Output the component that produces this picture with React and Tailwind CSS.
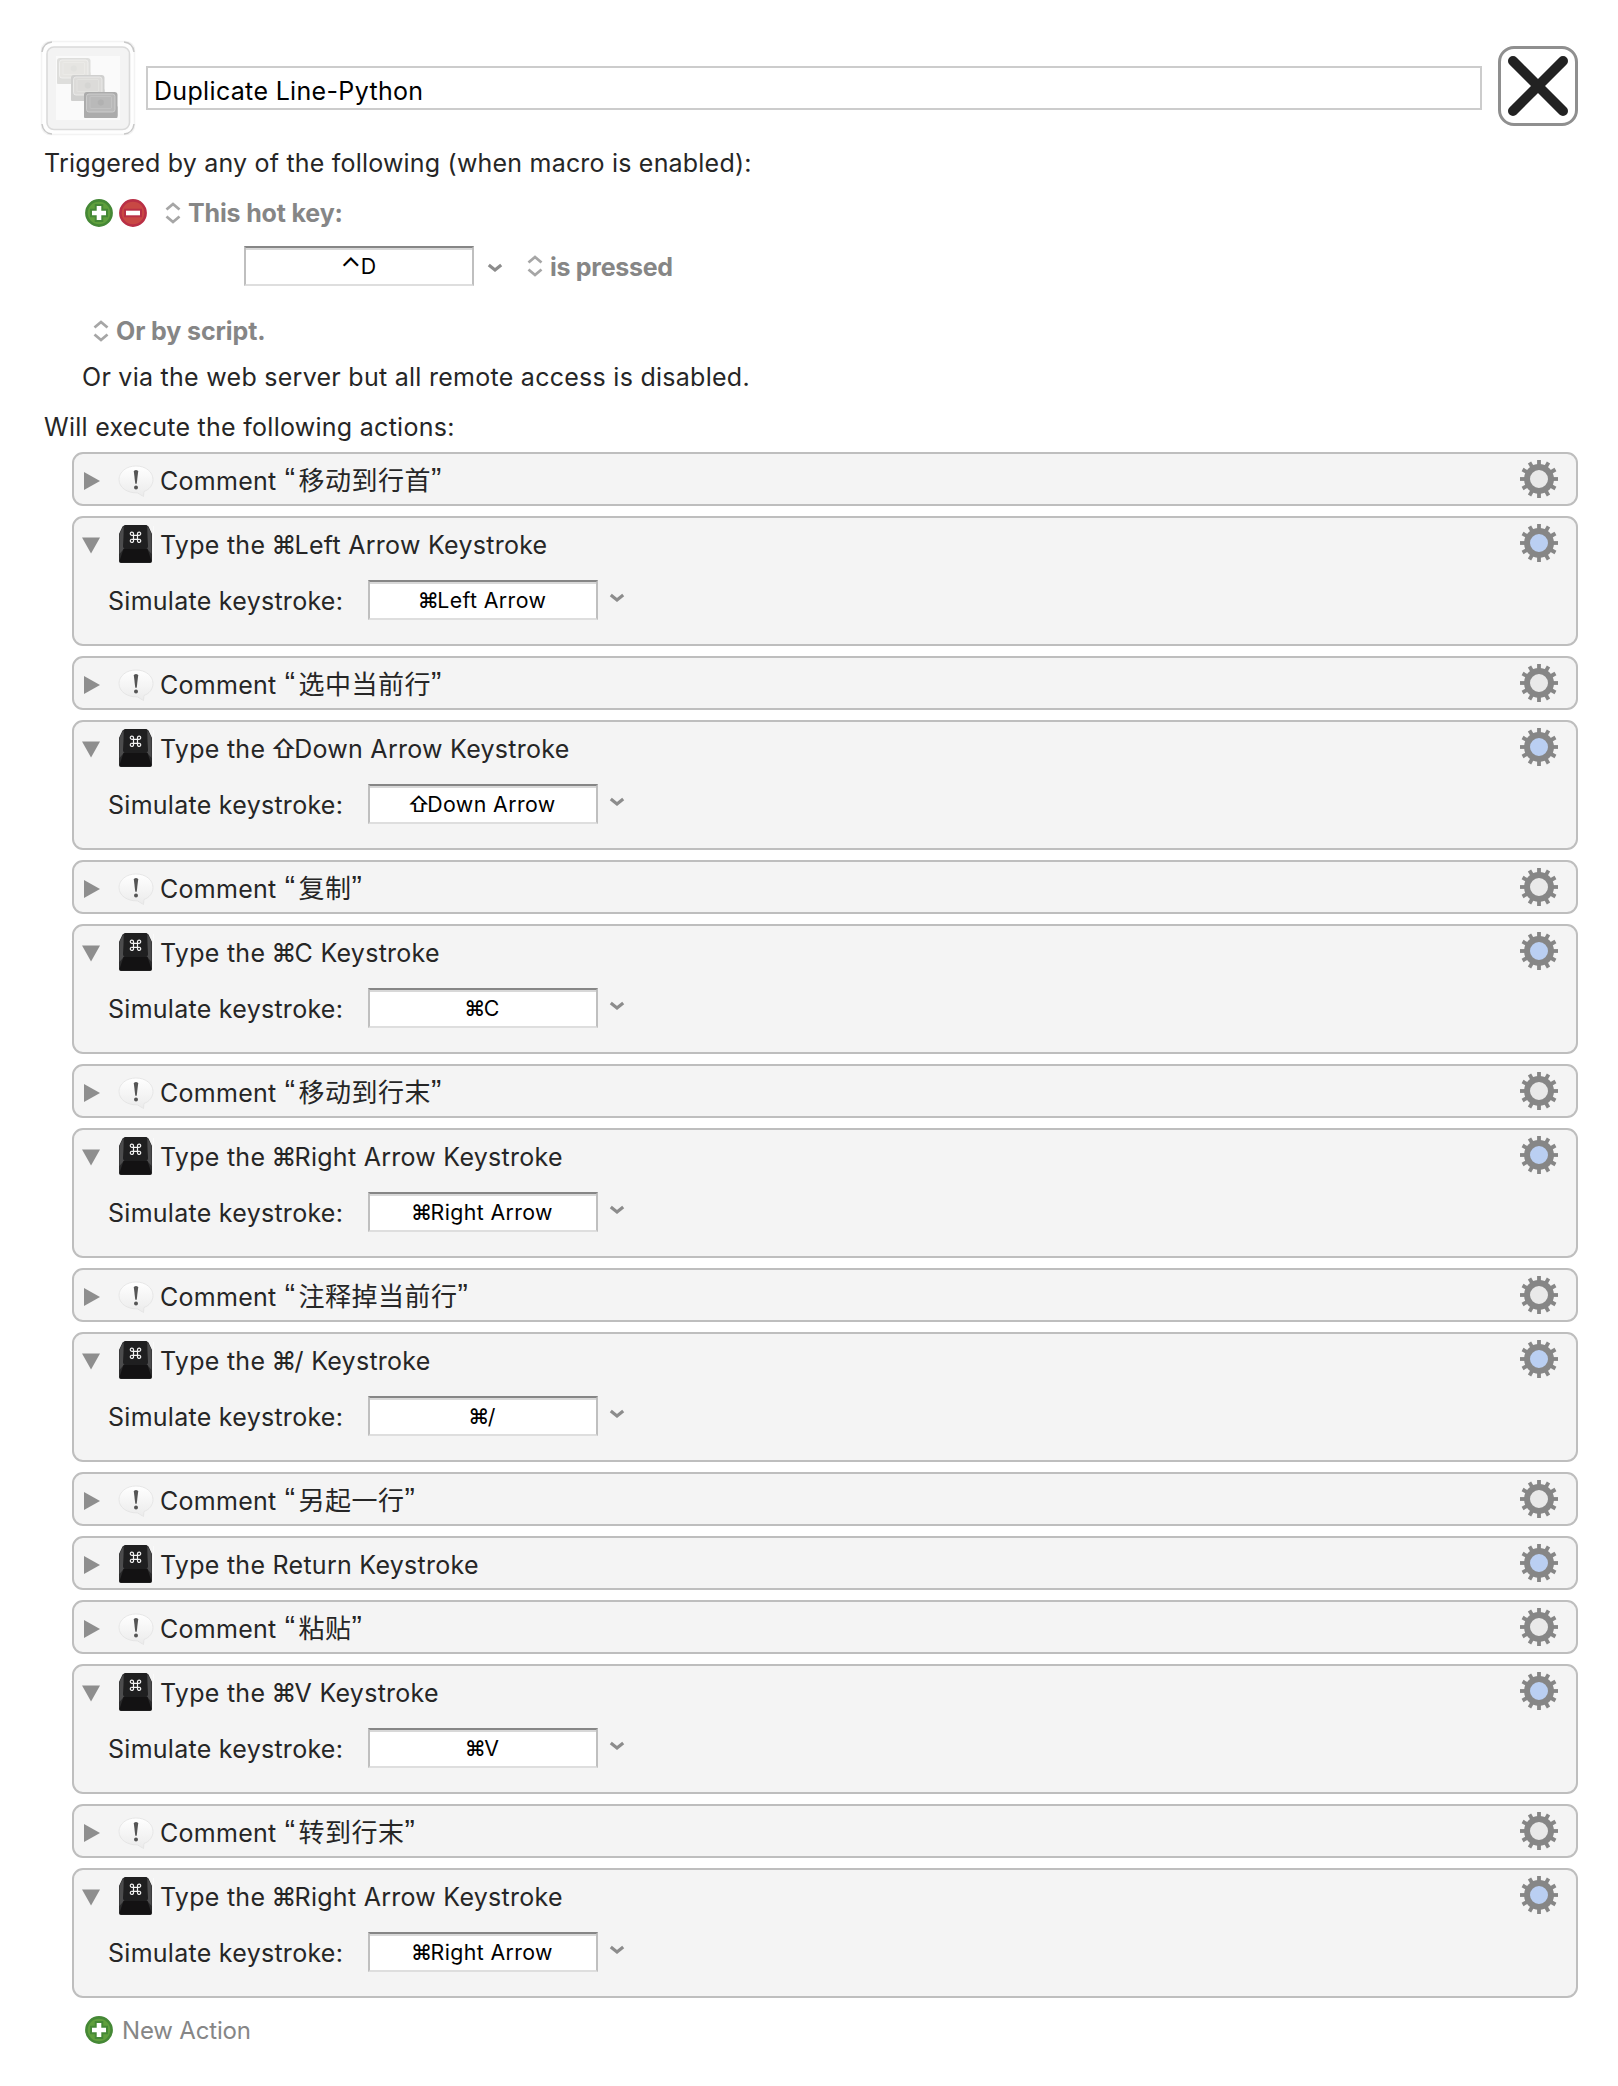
import React from "react";

const actions = [
  { kind: "comment", text: "移动到行首" },
  { kind: "key", open: true, key: "⌘Left Arrow" },
  { kind: "comment", text: "选中当前行" },
  { kind: "key", open: true, key: "⇧Down Arrow" },
  { kind: "comment", text: "复制" },
  { kind: "key", open: true, key: "⌘C" },
  { kind: "comment", text: "移动到行末" },
  { kind: "key", open: true, key: "⌘Right Arrow" },
  { kind: "comment", text: "注释掉当前行" },
  { kind: "key", open: true, key: "⌘/" },
  { kind: "comment", text: "另起一行" },
  { kind: "key", open: false, key: "Return" },
  { kind: "comment", text: "粘贴" },
  { kind: "key", open: true, key: "⌘V" },
  { kind: "comment", text: "转到行末" },
  { kind: "key", open: true, key: "⌘Right Arrow" },
];

function MacroIcon() {
  const key = (x, y, base, face, edge) => (
    <g transform={`translate(${x} ${y})`}>
      <rect width="33.5" height="26" rx="3" fill={base} />
      <rect y="14" width="33.5" height="12" rx="1" fill={base} />
      <rect x="2.5" y="2" width="28.5" height="18" rx="2.5" fill={face} stroke={edge} strokeWidth="0.8" />
      <rect x="6" y="4.5" width="21.5" height="12" rx="1" fill="none" stroke={edge} strokeWidth="0.6" opacity="0.6" />
      <circle cx="16.8" cy="10.5" r="3" fill={base} opacity="0.6" />
    </g>
  );
  return (
    <svg className="size-24 shrink-0" viewBox="0 0 96 96">
      <rect x="1.5" y="1.5" width="93" height="93" rx="9" fill="#fefefe" stroke="#f3f3f3" strokeWidth="1.6" />
      <g fill="none" stroke="#c8c8c8" strokeWidth="1.5">
        <path d="M2 12Q3 3 12 2M84 2Q93 3 94 12M2 84Q3 93 12 94M84 94Q93 93 94 84" />
      </g>
      <rect x="7" y="7" width="82.500" height="82.500" rx="7" fill="#f3f3f3" stroke="#dadada" strokeWidth="1.6" />
      <rect x="16" y="16" width="64" height="64" fill="#fafafa" />
      {key(17, 18, "#dededc", "#e6e5e2", "#f3f3f1")}
      {key(31, 35, "#d0d0cf", "#dcdbd9", "#eeeeec")}
      {key(44, 52, "#ababab", "#b9b9b9", "#d2d2d2")}
    </svg>
  );
}

function CloseButton() {
  return (
    <svg className="size-20 shrink-0" viewBox="0 0 80 80">
      <rect x="1.5" y="1.5" width="77" height="77" rx="14.5" fill="#fff" stroke="#8f8f8f" strokeWidth="3" />
      <path d="M15 15L65 65M65 15L15 65" stroke="#222" strokeWidth="10" strokeLinecap="round" />
    </svg>
  );
}

function RoundButton({ minus }) {
  const line = minus ? "#b92f45" : "#458836";
  const fill = minus ? "#c84844" : "#5f9f3d";
  return (
    <svg className="size-7 shrink-0" viewBox="0 0 28 28">
      <circle cx="14" cy="14" r="12.6" fill={fill} stroke={line} strokeWidth="2.6" />
      <path d={minus ? "M5 14H23" : "M14 5V23M5 14H23"} stroke={line} strokeWidth="8.5" />
      <path d={minus ? "M7 14H21" : "M14 7V21M7 14H21"} stroke="#fff" strokeWidth="4.6" />
    </svg>
  );
}

function UpDown() {
  return (
    <svg className="w-4 h-6 shrink-0" viewBox="0 0 16 24" fill="none" stroke="#a6a6a6" strokeWidth="2.8">
      <path d="M1.5 8.5L8 3L14.5 8.5M1.5 15.5L8 21L14.5 15.5" />
    </svg>
  );
}

function ChevronDown({ className }) {
  return (
    <svg className={`w-4 h-3 shrink-0 ${className}`} viewBox="0 0 16 12" fill="none" stroke="#8c8c8c" strokeWidth="3.2">
      <path d="M1.8 3L8 8L14.2 3" />
    </svg>
  );
}

function Disclosure({ open }) {
  return (
    <svg className="size-5 shrink-0" viewBox="0 0 20 20">
      <path d={open ? "M1 2.5H19L10 18.5Z" : "M3 1L19 10L3 19Z"} fill="#8e8e8e" />
    </svg>
  );
}

function BubbleIcon() {
  return (
    <svg className="w-9 h-10 shrink-0" viewBox="0 0 36 40">
      <defs>
        <linearGradient id="bubble" x1="0" y1="0" x2="0" y2="1">
          <stop offset="0" stopColor="#ffffff" />
          <stop offset="1" stopColor="#ebebeb" />
        </linearGradient>
      </defs>
      <path
        d="M18 5C27.500 5 35 10.800 35 18.500C35 24 31.500 28.500 26 30.500L25.500 35.500L19.500 31.900C9 32.200 1 26.500 1 18.500C1 10.800 8.500 5 18 5Z"
        fill="url(#bubble)" stroke="#e2e2e2" strokeWidth="0.8"
      />
      <path d="M15.800 10.500Q15.800 9 18 9Q20.200 9 20.200 10.500L18.700 22.800H17.300Z" fill="#555" />
      <circle cx="18" cy="26.500" r="2" fill="#555" />
    </svg>
  );
}

function KeyIcon() {
  return (
    <svg className="w-9 h-10 shrink-0" viewBox="0 0 36 40">
      <path d="M35.500 2V38" stroke="#fafafa" strokeWidth="1" />
      <path d="M7 1H28.500L30.500 2.500L34 10V37Q34 39 32 39H3Q1 39 1 37V10L4.500 2.500Z" fill="#2b2b2c" />
      <path d="M5.500 2L1.500 10V30L6.500 24Z" fill="#4c4c4d" />
      <path d="M29.500 2L33.500 10V30L28.500 24Z" fill="#4c4c4d" />
      <path d="M5.500 25H29.500L33.500 37Q33.500 38.500 32 38.500H3Q1.500 38.500 1.500 37Z" fill="#131213" />
      <path d="M8 1H27Q29 1 29 3L30 22Q30 25 27 25H8Q5 25 5 22L6 3Q6 1 8 1Z" fill="#1f1f20" />
      <path
        transform="translate(17.500 13.300)" fill="none" stroke="#f2f2f2" strokeWidth="1.200"
        d="M-2 -2H2V2H-2ZM-2 -2H-3.300A1.600 1.600 0 1 1 -2 -3.600ZM2 -2V-3.600A1.600 1.600 0 1 1 3.300 -2ZM2 2H3.300A1.600 1.600 0 1 1 2 3.600ZM-2 2V3.600A1.600 1.600 0 1 1 -3.300 2Z"
      />
    </svg>
  );
}

function Gear({ fill }) {
  return (
    <svg className="size-[38px] shrink-0" viewBox="-19 -19 38 38">
      {Array.from({ length: 12 }, (_, i) => (
        <rect key={i} x="-1.900" y="-19" width="3.800" height="7" fill="#868686" transform={`rotate(${i * 30})`} />
      ))}
      <circle r="12" fill={fill} stroke="#868686" strokeWidth="6" />
    </svg>
  );
}

/* Tightens the side bearings of a leading modifier symbol. */
function KeyName({ name }) {
  if (name[0] === "⌘") return <><span className="-ml-px -mr-[2px] font-medium">⌘</span>{name.slice(1)}</>;
  if (name[0] === "⇧") return <><span className="-ml-[2px] -mr-[3px] font-medium">⇧</span>{name.slice(1)}</>;
  return name;
}

function KeyField({ children }) {
  return (
    <div className="flex h-10 w-[230px] shrink-0 items-center justify-center border-2 border-[#bfbfbf] border-t-[#868686] border-b-[#dedede] bg-white pt-[2px] pr-px text-[21.3px] tracking-[0.4px] text-black shadow-[inset_0_2px_0_#d8d8d8]">
      <span className="whitespace-nowrap">{children}</span>
    </div>
  );
}

function Action({ action }) {
  const comment = action.kind === "comment";
  return (
    <section className={`rounded-[11px] border-2 border-[#bebebe] bg-[#f4f4f4] ${action.open ? "h-[130px]" : "h-[54px]"}`}>
      <div className="flex h-[50px] items-center pl-[7px]">
        <div className="mt-[3px]"><Disclosure open={action.open} /></div>
        <div className={comment ? "ml-[17px] mr-[6px] mt-[3px]" : "ml-[17px] mr-[6px] mt-[2px]"}>
          {comment ? <BubbleIcon /> : <KeyIcon />}
        </div>
        <span className="mt-[5px] grow whitespace-nowrap">
          {comment ? (
            <>
              Comment <span className="ml-px mr-[3px] font-['Liberation_Sans',sans-serif] text-[31px] leading-[0]">“</span>
              <span className="text-[26px] leading-[0] tracking-[0.5px]">{action.text}</span>
              <span className="font-['Liberation_Sans',sans-serif] text-[31px] leading-[0]">”</span>
            </>
          ) : (
            <>Type the <KeyName name={action.key} /> Keystroke</>
          )}
        </span>
        <div className="mr-[18px]"><Gear fill={comment ? "#e9e9e9" : "#bacff2"} /></div>
      </div>
      {action.open && (
        <div className="mt-3 flex h-10 items-center pl-[34px]">
          <span className="w-[260px] whitespace-nowrap pt-[4px]">Simulate keystroke:</span>
          <KeyField><KeyName name={action.key} /></KeyField>
          <ChevronDown className="ml-[11px] -mt-1" />
        </div>
      )}
    </section>
  );
}

export default function App() {
  return (
    <main className="min-h-[2086px] w-[1618px] bg-white px-10 pt-10 font-['Inter','Noto_Sans_CJK_SC',sans-serif] text-[25px] tracking-[0.27px] text-[#262626]">
      <header className="flex h-24 items-center">
        <MacroIcon />
        <div className="ml-[10px] flex h-11 w-[1336px] items-center border-2 border-[#ccc] pl-[6px] pt-[7px] tracking-[0.33px] text-black">
          Duplicate Line-Python
        </div>
        <div className="ml-4 -mt-1"><CloseButton /></div>
      </header>
      <p className="mt-[9px] flex h-9 items-center pl-[4px] pt-[2px] tracking-[0.2px]">
        Triggered by any of the following (when macro is enabled):
      </p>
      <div className="mt-[14px] flex h-9 items-center pl-[45px] font-bold tracking-[-0.15px] text-[#868686]">
        <RoundButton />
        <div className="w-[6px]" />
        <RoundButton minus />
        <div className="w-[18px]" />
        <UpDown />
        <span className="ml-[7px] pt-[2px]">This hot key:</span>
      </div>
      <div className="mt-[15px] flex h-10 items-center pl-[204px]">
        <KeyField><span className="-mr-px align-[-3px] text-[27px] leading-[0]">⌃</span>D</KeyField>
        <ChevronDown className="ml-[13px] mt-1" />
        <div className="w-6" />
        <UpDown />
        <span className="ml-[7px] mt-1 font-bold tracking-[-0.28px] text-[#868686]">is pressed</span>
      </div>
      <div className="mt-[27px] flex h-9 items-center pl-[53px] font-bold tracking-[-0.1px] text-[#868686]">
        <UpDown />
        <span className="ml-[7px] pt-[2px]">Or by script.</span>
      </div>
      <p className="mt-[10px] flex h-9 items-center pl-[42px] pt-[2px]">
        Or via the web server but all remote access is disabled.
      </p>
      <p className="mt-[14px] flex h-9 items-center pl-[4px] pt-[2px]">Will execute the following actions:</p>
      <div className="mt-[7px] ml-8 flex w-[1506px] flex-col gap-[10px]">
        {actions.map((a, i) => <Action key={i} action={a} />)}
      </div>
      <div className="mt-[14px] flex h-9 items-center gap-[9px] pl-[45px] text-[24px] tracking-[-0.18px] text-[#868686]">
        <RoundButton />
        <span className="pt-px">New Action</span>
      </div>
    </main>
  );
}
